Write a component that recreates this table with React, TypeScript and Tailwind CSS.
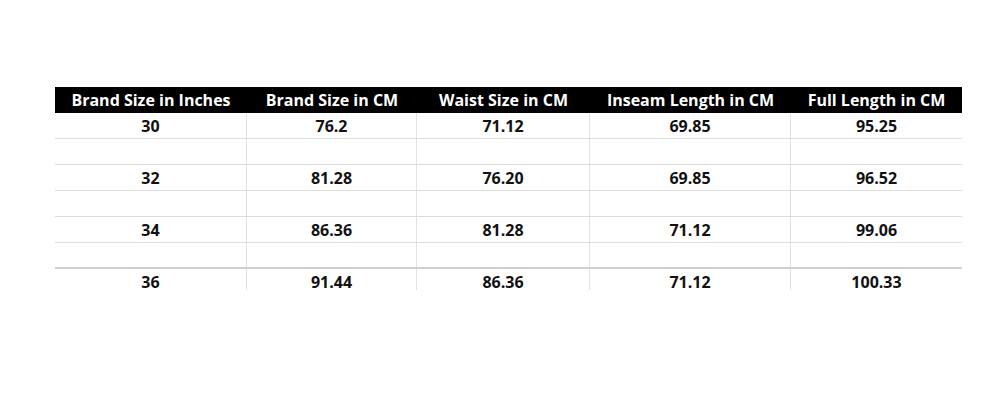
const headers = [
  "Brand Size in Inches",
  "Brand Size in CM",
  "Waist Size in CM",
  "Inseam Length in CM",
  "Full Length in CM",
];

const rows = [
  ["30", "76.2", "71.12", "69.85", "95.25"],
  null,
  ["32", "81.28", "76.20", "69.85", "96.52"],
  null,
  ["34", "86.36", "81.28", "71.12", "99.06"],
  null,
  ["36", "91.44", "86.36", "71.12", "100.33"],
];

const widths = ["w-[192px]", "w-[170px]", "w-[173px]", "w-[201px]", "w-[171px]"];

export default function App() {
  return (
    <div className="w-[1000px] h-[400px] bg-white pt-[87px] pl-[55px]" style={{ fontFamily: "'Open Sans', sans-serif" }}>
      <div className="w-[907px] h-[203px] overflow-hidden">
        <div className="flex h-[26px] bg-black text-white font-bold text-[16px] leading-none">
          {headers.map((h, i) => (
            <div key={h} className={`${widths[i]} flex items-center justify-center`}>
              {h}
            </div>
          ))}
        </div>
        {rows.map((r, ri) => (
          <div
            key={ri}
            className={`flex h-[26px] ${ri === 5 ? "border-b-2 border-[#cfcfcf]" : "border-b border-[#dcdcdc]"}`}
          >
            {widths.map((w, ci) => (
              <div
                key={ci}
                className={`${w} flex items-center justify-center text-[16px] leading-none font-bold text-[#111] pt-[1px] ${ci < 4 ? "border-r border-[#e2e2e2]" : ""}`}
              >
                {r ? r[ci] : ""}
              </div>
            ))}
          </div>
        ))}
      </div>
    </div>
  );
}
